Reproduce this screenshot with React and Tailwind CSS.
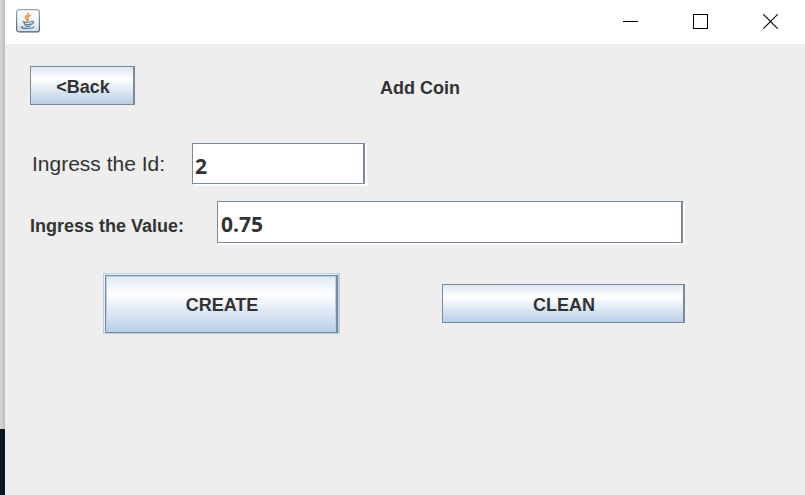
import React from "react";

const FACE =
  "bg-[linear-gradient(to_bottom,#dde8f3_0%,#ffffff_32%,#dde8f3_64%,#b8cfe5_100%)] border border-r-2 border-[#7a8a99] font-bold text-lg text-[#333333] pt-0.5 pl-0.5";
const FIELD =
  "min-w-0 border border-r-2 border-[#7a8a99] bg-white shadow-[2px_2px_0_#ffffff] pt-1 font-['Open_Sans','Noto_Sans',sans-serif] text-[21px] font-bold text-[#333333] outline-none";

function JavaIcon() {
  return (
    <svg width="24" height="24" viewBox="0 0 24 24" fill="none" aria-hidden="true">
      <defs>
        <linearGradient id="tile" x1="0" y1="0" x2="0" y2="1">
          <stop offset="0" stopColor="#ffffff" />
          <stop offset="0.5" stopColor="#f2f5f8" />
          <stop offset="1" stopColor="#cfdce8" />
        </linearGradient>
        <linearGradient id="edge" x1="0" y1="0" x2="0" y2="1">
          <stop offset="0" stopColor="#9aa5ae" />
          <stop offset="1" stopColor="#48617a" />
        </linearGradient>
      </defs>
      <rect x="0.6" y="0.6" width="22.8" height="22.3" rx="2.5" fill="url(#tile)" stroke="url(#edge)" strokeWidth="1.2" />
      <path d="M12.2 4c.8 1.8-2.8 2.7-2.7 4.6 0 1.2 1.3 1.7 1.7 2.9M14.4 6.3c-1.6.6-3 1.4-2.7 2.6.3.9 1 1.1.3 2.3" stroke="#e58a3c" strokeWidth="1.4" strokeLinecap="round" />
      <path d="M7 12.5c1.5.8 6.8.8 9 0M7.8 12.9c.1 1.1.5 1.7 1.1 2.2 1.6.5 4.2.5 5.8 0M8.7 15.2c.3 1 1 1.7 1.6 1.9 1.2.3 2.6.3 3.7-.1M16 12.5c2.2-.6 2.7 1.8-.9 2.9" stroke="#5b7f9c" strokeWidth="1.2" strokeLinecap="round" />
      <path d="M6.5 17.6c-2.9.9-.6 1.8 5 1.7 3.700 0 6.200-.6 6.400-1.500" stroke="#5b7f9c" strokeWidth="1.2" strokeLinecap="round" />
    </svg>
  );
}

function TitleBar() {
  return (
    <header className="flex h-11 items-start justify-between bg-white pl-[11px]">
      <div className="pt-[9px]">
        <JavaIcon />
      </div>
      <div className="flex">
        <button type="button" aria-label="Minimize" className="flex h-[43px] w-[70px] items-center justify-center">
          <svg width="15" height="15" viewBox="0 0 15 15" shapeRendering="crispEdges">
            <path d="M0 7.5H15" stroke="#000" />
          </svg>
        </button>
        <button type="button" aria-label="Maximize" className="flex h-[43px] w-[70px] items-center justify-center">
          <svg width="15" height="15" viewBox="0 0 15 15" fill="none" shapeRendering="crispEdges">
            <rect x="0.5" y="0.5" width="14" height="14" stroke="#000" />
          </svg>
        </button>
        <button type="button" aria-label="Close" className="flex h-[43px] w-[70px] items-center justify-center">
          <svg width="15" height="15" viewBox="0 0 15 15">
            <path d="M0.3 0.3L14.7 14.7M14.7 0.3L0.3 14.7" stroke="#000" strokeWidth="1.1" />
          </svg>
        </button>
      </div>
    </header>
  );
}

export default function App() {
  return (
    <div className="flex min-h-screen bg-[#eeeeee] font-['Liberation_Sans',Arial,sans-serif] text-[#333333]">
      <div className="flex w-[5px] shrink-0 flex-col">
        <div className="h-[429px] bg-linear-to-r from-[#d6d6d6] to-[#bebebe]" />
        <div className="grow bg-[#0d161e]" />
      </div>
      <div className="min-w-0 grow">
        <TitleBar />
        <main className="px-[25px] pt-[22px]">
          <div className="flex items-center">
            <button type="button" className={`${FACE} h-[39px] w-[105px]`}>
              &lt;Back
            </button>
            <h1 className="ml-[245px] pt-1 text-lg font-bold">Add Coin</h1>
          </div>
          <form onSubmit={(e) => e.preventDefault()}>
            <div className="mt-[38px] flex items-center">
              <label htmlFor="coin-id" className="w-[162px] shrink-0 pl-0.5 text-[21px] leading-7">
                Ingress the Id:
              </label>
              <input id="coin-id" type="text" defaultValue="2" className={`${FIELD} h-[41px] w-[173px] px-0.5`} />
            </div>
            <div className="mt-[17px] flex items-center pr-[97px]">
              <label htmlFor="coin-value" className="w-[187px] shrink-0 pt-2 text-lg font-bold">
                Ingress the Value:
              </label>
              <input id="coin-value" type="text" defaultValue="0.75" className={`${FIELD} h-[42px] grow px-[3px]`} />
            </div>
            <div className="mt-[30px] flex items-center justify-between pr-[95px] pl-[73px]">
              <div className="border border-r-2 border-[#b8cfe5] pt-px pl-px">
                <button type="submit" className={`${FACE} block h-[58px] w-[233px] shadow-[inset_0_0_0_1px_#b8cfe5]`}>
                  CREATE
                </button>
              </div>
              <button type="reset" className={`${FACE} h-[39px] w-[243px]`}>
                CLEAN
              </button>
            </div>
          </form>
        </main>
      </div>
    </div>
  );
}
